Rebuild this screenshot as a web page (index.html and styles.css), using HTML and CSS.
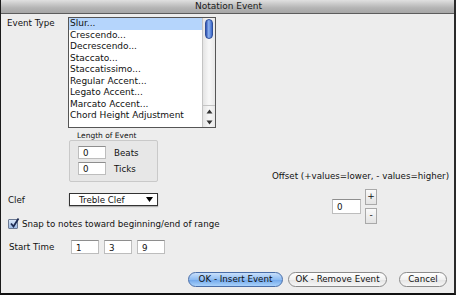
FILE: index.html
```html
<!doctype html>
<html lang="en">
  <head>
    <meta charset="UTF-8" />
    <title>Notation Event</title>
    <link rel="stylesheet" href="styles.css">
  </head>
  <body>
    <div class="window">
      <div class="titlebar">Notation Event</div>

      <div class="content">
        <div class="main">
          <!-- Left column: event type, length, clef, snap, start -->
          <div class="left">
            <div class="row event-row">
              <span class="label">Event Type</span>
              <div class="listbox">
                <ul class="items">
                  <li class="selected">Slur...</li>
                  <li>Crescendo...</li>
                  <li>Decrescendo...</li>
                  <li>Staccato...</li>
                  <li>Staccatissimo...</li>
                  <li>Regular Accent...</li>
                  <li>Legato Accent...</li>
                  <li>Marcato Accent...</li>
                  <li>Chord Height Adjustment</li>
                </ul>
                <div class="scrollbar">
                  <div class="thumb"></div>
                  <div class="arrows">
                    <svg width="7" height="5" viewBox="0 0 7 5"><path d="M3.5 0.5 L6.5 4.5 L0.5 4.5 Z" fill="#333"/></svg>
                    <svg width="7" height="5" viewBox="0 0 7 5"><path d="M0.5 0.5 L6.5 0.5 L3.5 4.5 Z" fill="#333"/></svg>
                  </div>
                </div>
              </div>
            </div>

            <div class="length">
              <div class="group-title">Length of Event</div>
              <div class="group">
                <div class="field-row">
                  <span class="field">0</span>
                  <span class="unit">Beats</span>
                </div>
                <div class="field-row">
                  <span class="field">0</span>
                  <span class="unit">Ticks</span>
                </div>
              </div>
            </div>

            <div class="row clef-row">
              <span class="label">Clef</span>
              <div class="select">
                <span>Treble Clef</span>
                <svg width="7" height="5" viewBox="0 0 7 5"><path d="M0 0 L7 0 L3.5 5 Z" fill="#000"/></svg>
              </div>
            </div>

            <div class="check-row">
              <span class="checkbox">
                <svg width="11" height="11" viewBox="0 0 11 11">
                  <path d="M2 5.5 L4.5 8.5 L9.5 0.5" fill="none" stroke="#1d2b52" stroke-width="1.8"/>
                </svg>
              </span>
              <span>Snap to notes toward beginning/end of range</span>
            </div>

            <div class="row start-row">
              <span class="label">Start Time</span>
              <span class="field">1</span>
              <span class="field">3</span>
              <span class="field">9</span>
            </div>
          </div>

          <!-- Right column: offset -->
          <div class="right">
            <div class="offset-label">Offset (+values=lower, - values=higher)</div>
            <div class="offset-ctrl">
              <span class="field offset-field">0</span>
              <div class="steppers">
                <span class="step">+</span>
                <span class="step">-</span>
              </div>
            </div>
          </div>
        </div>

        <div class="buttons">
          <span class="btn default">OK - Insert Event</span>
          <span class="btn remove">OK - Remove Event</span>
          <span class="btn cancel">Cancel</span>
        </div>
      </div>
    </div>
  </body>
</html>
```

FILE: styles.css
```css
/* Page */
body {
  margin: 0;
  font-family: "DejaVu Sans", Verdana, sans-serif;
  font-size: 8.7px;
  color: #111;
  background: #000;
}

.window {
  width: 456px;
  height: 295px;
  box-sizing: border-box;
  border-left: 1px solid #1a1a1a;
  border-right: 2px solid #2a2a2a;
  border-bottom: 2px solid #111;
  background: #ededed;
  display: flex;
  flex-direction: column;
}

/* Title bar */
.titlebar {
  height: 13px;
  line-height: 13px;
  border-bottom: 1px solid #5c5c5c;
  background: linear-gradient(#e0e0e0, #b4b4b4 60%, #a6a6a6);
  text-align: center;
  color: #1a1a1a;
  padding-left: 2px;
  font-size: 9px;
}

.content {
  flex: 1;
  display: flex;
  flex-direction: column;
  padding: 3px 7px 6px 6px;
}

.main {
  display: flex;
}

.left {
  width: 265px;
  flex-shrink: 0;
  display: flex;
  flex-direction: column;
}

.row {
  display: flex;
  align-items: center;
}

.label {
  width: 61px;
  flex-shrink: 0;
}

.event-row {
  align-items: flex-start;
}

.event-row .label {
  padding-top: 1px;
}

/* List box */
.listbox {
  width: 148px;
  height: 111px;
  box-sizing: border-box;
  border: 1px solid #555;
  background: #fff;
  display: flex;
}

.items {
  list-style: none;
  margin: 0;
  padding: 0;
  flex: 1;
}

.items li {
  height: 11.5px;
  line-height: 11.5px;
  padding-left: 1px;
  white-space: nowrap;
  font-size: 9px;
}

.items li.selected {
  background: #b5d5fc;
}

.scrollbar {
  width: 12px;
  border-left: 1px solid #c4c4c4;
  background: linear-gradient(90deg, #e4e4e4, #f8f8f8 50%, #e8e8e8);
  display: flex;
  flex-direction: column;
  justify-content: space-between;
  align-items: center;
}

.thumb {
  width: 8px;
  height: 20px;
  margin-top: 1px;
  border-radius: 4px;
  border: 1px solid #2f4f9a;
  box-sizing: border-box;
  background: linear-gradient(90deg, #2d4fb0, #8fb4f0 45%, #3a66c8);
}

.arrows {
  display: flex;
  flex-direction: column;
  gap: 6px;
  padding: 3px 0 2px;
  border-top: 1px solid #c4c4c4;
  width: 100%;
  align-items: center;
}

/* Length of event group */
.length {
  margin-left: 62px;
  margin-top: 3px;
}

.group-title {
  font-size: 7.5px;
  line-height: 9px;
  padding-left: 8px;
}

.group {
  width: 89px;
  height: 42px;
  box-sizing: border-box;
  border: 1px solid #c9c9c9;
  border-radius: 2px;
  background: #e7e7e7;
  padding: 5px 0 0 8px;
  display: flex;
  flex-direction: column;
  gap: 3px;
}

.field-row {
  display: flex;
  align-items: center;
  gap: 8px;
}

.field {
  display: inline-block;
  width: 28px;
  height: 13px;
  line-height: 13px;
  box-sizing: border-box;
  background: #fff;
  border: 1px solid #bdbdbd;
  border-top-color: #8e8e8e;
  padding-left: 4px;
}

/* Clef */
.clef-row {
  margin-top: 11px;
}

.clef-row .label {
  padding-left: 1px;
  width: 61px;
}

.select {
  width: 89px;
  height: 13px;
  box-sizing: border-box;
  border: 1px solid #333;
  background: #fff;
  box-shadow: 0 1px 1px rgba(0, 0, 0, 0.25);
  display: flex;
  align-items: center;
  justify-content: space-between;
  padding: 0 4px 0 9px;
}

/* Snap checkbox */
.check-row {
  margin-top: 13px;
  display: flex;
  align-items: center;
  gap: 4px;
  padding-left: 1px;
}

.checkbox {
  width: 10px;
  height: 10px;
  box-sizing: border-box;
  border: 1px solid #6c7a94;
  border-radius: 1px;
  background: linear-gradient(#d9e6f7, #9fbde6);
  position: relative;
}

.checkbox svg {
  position: absolute;
  left: 0;
  top: -2px;
}

/* Start time */
.start-row {
  margin-top: 11px;
  gap: 5px;
}

.start-row .label {
  width: 57px;
  padding-left: 2px;
}

.start-row .field {
  height: 14px;
  line-height: 14px;
}

/* Offset */
.right {
  padding-top: 154px;
}

.offset-label {
  white-space: nowrap;
  line-height: 10px;
}

.offset-ctrl {
  margin-top: 8px;
  margin-left: 60px;
  display: flex;
  align-items: center;
  gap: 4px;
}

.offset-field {
  width: 29px;
  height: 15px;
  line-height: 15px;
}

.steppers {
  display: flex;
  flex-direction: column;
  gap: 3px;
}

.step {
  width: 12px;
  height: 16px;
  box-sizing: border-box;
  border: 1px solid #a9a9a9;
  background: linear-gradient(#fafafa, #e3e3e3);
  text-align: center;
  line-height: 13px;
  font-size: 9px;
}

/* Bottom buttons */
.buttons {
  margin-top: auto;
  display: flex;
  justify-content: flex-end;
}

.btn {
  height: 15px;
  line-height: 13px;
  box-sizing: border-box;
  border: 1px solid #8b8b8b;
  border-radius: 8px;
  background: linear-gradient(#ffffff, #f1f1f1 50%, #e4e4e4 51%, #f6f6f6);
  text-align: center;
  color: #111;
}

.btn.default {
  width: 95px;
  border-color: #4a6ea8;
  background: linear-gradient(#c9e0fb, #8ebcf2 50%, #6ea5ea 51%, #a9d2fb);
}

.btn.remove {
  width: 99px;
  margin-left: 5px;
}

.btn.cancel {
  width: 48px;
  margin-left: 12px;
}
```
